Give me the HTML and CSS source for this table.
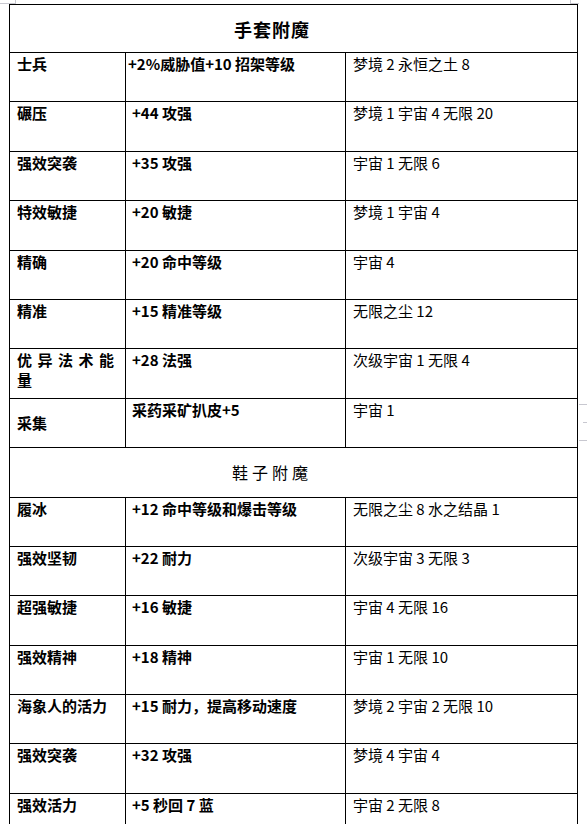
FILE: index.html
```html
<!DOCTYPE html>
<html lang="zh">
<head>
<meta charset="utf-8">
<link rel="stylesheet" href="styles.css">
</head>
<body>
<div class="page">
<span class="mark mk-tl"></span>
<span class="mark mk-tr"></span>
<span class="mark mk-r1"></span>
<span class="mark mk-r2"></span>
<span class="mark mk-r3"></span>
<table class="ench">
  <colgroup><col class="c1"><col class="c2"><col class="c3"></colgroup>
  <tr class="head first"><td colspan="3"><span class="t1">手套附魔</span></td></tr>
  <tr><td class="n">士兵</td><td class="e tight">+2%威胁值+10 招架等级</td><td class="m">梦境 2 永恒之土 8</td></tr>
  <tr><td class="n">碾压</td><td class="e">+44 攻强</td><td class="m">梦境 1 宇宙 4 无限 20</td></tr>
  <tr><td class="n">强效突袭</td><td class="e">+35 攻强</td><td class="m">宇宙 1 无限 6</td></tr>
  <tr><td class="n">特效敏捷</td><td class="e">+20 敏捷</td><td class="m">梦境 1 宇宙 4</td></tr>
  <tr><td class="n">精确</td><td class="e">+20 命中等级</td><td class="m">宇宙 4</td></tr>
  <tr><td class="n">精准</td><td class="e">+15 精准等级</td><td class="m">无限之尘 12</td></tr>
  <tr><td class="n just">优异法术能量</td><td class="e">+28 法强</td><td class="m">次级宇宙 1 无限 4</td></tr>
  <tr><td class="n mid">采集</td><td class="e">采药采矿扒皮+5</td><td class="m">宇宙 1</td></tr>
  <tr class="head"><td colspan="3"><span class="t2">鞋子附魔</span></td></tr>
  <tr><td class="n">履冰</td><td class="e">+12 命中等级和爆击等级</td><td class="m">无限之尘 8 水之结晶 1</td></tr>
  <tr><td class="n">强效坚韧</td><td class="e">+22 耐力</td><td class="m">次级宇宙 3 无限 3</td></tr>
  <tr><td class="n">超强敏捷</td><td class="e">+16 敏捷</td><td class="m">宇宙 4 无限 16</td></tr>
  <tr><td class="n">强效精神</td><td class="e">+18 精神</td><td class="m">宇宙 1 无限 10</td></tr>
  <tr><td class="n">海象人的活力</td><td class="e">+15 耐力，提高移动速度</td><td class="m">梦境 2 宇宙 2 无限 10</td></tr>
  <tr><td class="n">强效突袭</td><td class="e">+32 攻强</td><td class="m">梦境 4 宇宙 4</td></tr>
  <tr><td class="n">强效活力</td><td class="e">+5 秒回 7 蓝</td><td class="m">宇宙 2 无限 8</td></tr>
</table>
</div>
</body>
</html>
```
FILE: styles.css
```css
html, body {
  margin: 0;
  padding: 0;
  background: #ffffff;
}
.page {
  position: relative;
  padding: 4px 0 0 9px;
  font-family: "Noto Sans CJK SC", sans-serif;
  color: #000;
}
.mark {
  position: absolute;
  display: block;
  border-color: #c8c8d0;
  border-style: solid;
  border-width: 0;
}
.mk-tl { left: 0; top: 0; width: 15px; height: 3px; border-right-width: 1px; border-bottom-width: 1px; }
.mk-tr { left: 570px; top: 0; width: 8px; height: 3px; border-left-width: 1px; border-bottom-width: 1px; }
.mk-r1 { left: 579px; top: 404px; width: 8px; height: 0; border-top-width: 1px; }
.mk-r2 { left: 583px; top: 422px; width: 4px; height: 0; border-top-width: 1px; }
.mk-r3 { left: 579px; top: 440px; width: 8px; height: 0; border-top-width: 1px; }
.ench {
  border-collapse: collapse;
  table-layout: fixed;
  width: 569px;
}
.c1 { width: 116px; }
.c2 { width: 220px; }
.c3 { width: 232px; }
.ench td {
  border: 1px solid #000;
  vertical-align: top;
  padding: 1px 6px 0 7px;
  font-size: 15px;
  line-height: 20px;
  text-align: justify;
  overflow: hidden;
}
.ench tr { height: 49.4px; }
.ench tr.first { height: 48px; }
.ench td.n { font-weight: bold; }
.ench td.just { letter-spacing: 5px; }
.ench td.e { font-weight: bold; padding-left: 6px; }
.ench td.e.tight { padding-left: 2px; }
.ench td.m { font-weight: normal; }
.ench td.mid { vertical-align: middle; }
.ench tr.head td {
  text-align: center;
  padding: 0 43px 0 0;
  vertical-align: middle;
}
.t1 {
  font-size: 18px;
  font-weight: bold;
  letter-spacing: 1px;
  line-height: 24px;
}
.t2 {
  font-size: 16px;
  letter-spacing: 4px;
  line-height: 22px;
}
```
